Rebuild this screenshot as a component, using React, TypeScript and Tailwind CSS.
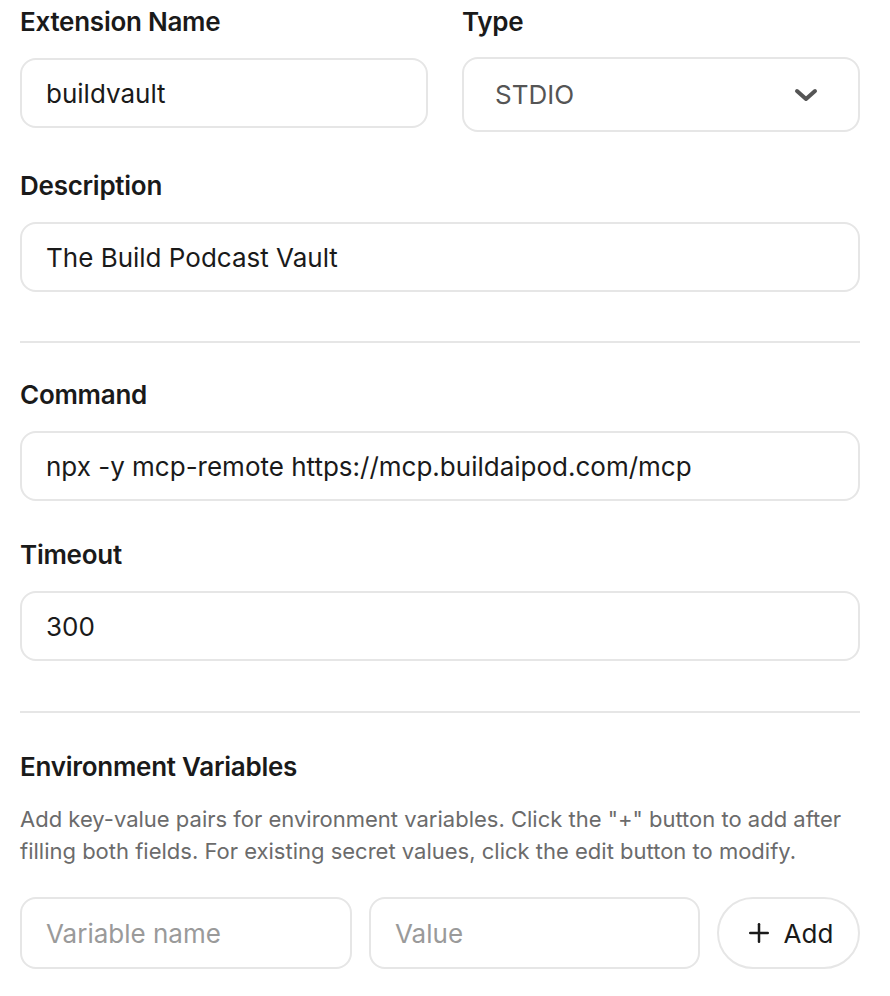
import React, { useState } from 'react';
import { Plus } from 'lucide-react';

const font = { fontFamily: 'Inter, "Noto Sans", sans-serif' };

const Label: React.FC<{ children: React.ReactNode }> = ({ children }) => (
  <label className="block h-10 text-[26px] leading-10 font-semibold text-[#1a1a1a] tracking-[-0.01em]">
    {children}
  </label>
);

const inputClass =
  'w-full h-[70px] px-[24px] rounded-2xl border-2 border-[#e6e6e6] bg-white text-[26px] text-[#1a1a1a] placeholder:text-[#9a9a9a] outline-none';

export default function App() {
  const [name, setName] = useState('buildvault');
  const [description, setDescription] = useState('The Build Podcast Vault');
  const [command, setCommand] = useState('npx -y mcp-remote https://mcp.buildaipod.com/mcp');
  const [timeout, setTimeoutValue] = useState('300');
  const [varName, setVarName] = useState('');
  const [varValue, setVarValue] = useState('');

  return (
    <div className="min-h-screen bg-white pl-5 pr-[30px] pt-[2px]" style={font}>
      {/* Name + type */}
      <div className="grid grid-cols-[408px_1fr] gap-x-[34px]">
        <div>
          <Label>Extension Name</Label>
          <input className={`${inputClass} mt-4`} value={name} onChange={(e) => setName(e.target.value)} />
        </div>
        <div>
          <Label>Type</Label>
          <button className="mt-[15px] w-full h-[75px] pl-[31px] pr-[40px] rounded-2xl border-2 border-[#e6e6e6] bg-white flex items-center justify-between text-[26px] text-[#555]">
            <span>STDIO</span>
            <svg width="24" height="14" viewBox="0 0 24 14" fill="none">
              <path d="M3 3l9 8 9-8" stroke="#555" strokeWidth="4" strokeLinecap="round" strokeLinejoin="round" />
            </svg>
          </button>
        </div>
      </div>

      {/* Description */}
      <div className="mt-[34px]">
        <Label>Description</Label>
        <input className={`${inputClass} mt-4`} value={description} onChange={(e) => setDescription(e.target.value)} />
      </div>

      <div className="mt-[49px] h-[2px] bg-[#e6e6e6]" />

      {/* Command */}
      <div className="mt-[32px]">
        <Label>Command</Label>
        <input className={`${inputClass} mt-4`} value={command} onChange={(e) => setCommand(e.target.value)} />
      </div>

      {/* Timeout */}
      <div className="mt-[34px]">
        <Label>Timeout</Label>
        <input className={`${inputClass} mt-4`} value={timeout} onChange={(e) => setTimeoutValue(e.target.value)} />
      </div>

      <div className="mt-[50px] h-[2px] bg-[#e6e6e6]" />

      {/* Environment variables */}
      <div className="mt-[34px]">
        <Label>Environment Variables</Label>
        <p className="mt-4 text-[22px] leading-8 text-[#6b6b6b]">
          Add key-value pairs for environment variables. Click the "+" button to add after filling both fields. For existing secret values, click the edit button to modify.
        </p>
        <div className="mt-[30px] flex gap-[17px]">
          <input
            className="w-[332px] h-[72px] px-[24px] rounded-2xl border-2 border-[#e6e6e6] bg-white text-[26px] text-[#1a1a1a] placeholder:text-[#9a9a9a] outline-none"
            placeholder="Variable name"
            value={varName}
            onChange={(e) => setVarName(e.target.value)}
          />
          <input
            className="w-[331px] h-[72px] px-[24px] rounded-2xl border-2 border-[#e6e6e6] bg-white text-[26px] text-[#1a1a1a] placeholder:text-[#9a9a9a] outline-none"
            placeholder="Value"
            value={varValue}
            onChange={(e) => setVarValue(e.target.value)}
          />
          <button className="flex-1 h-[72px] rounded-full border-2 border-[#e6e6e6] bg-white flex items-center justify-center gap-[10px] text-[26px] text-[#1a1a1a]">
            <Plus size={30} strokeWidth={2} />
            <span>Add</span>
          </button>
        </div>
      </div>
    </div>
  );
}
